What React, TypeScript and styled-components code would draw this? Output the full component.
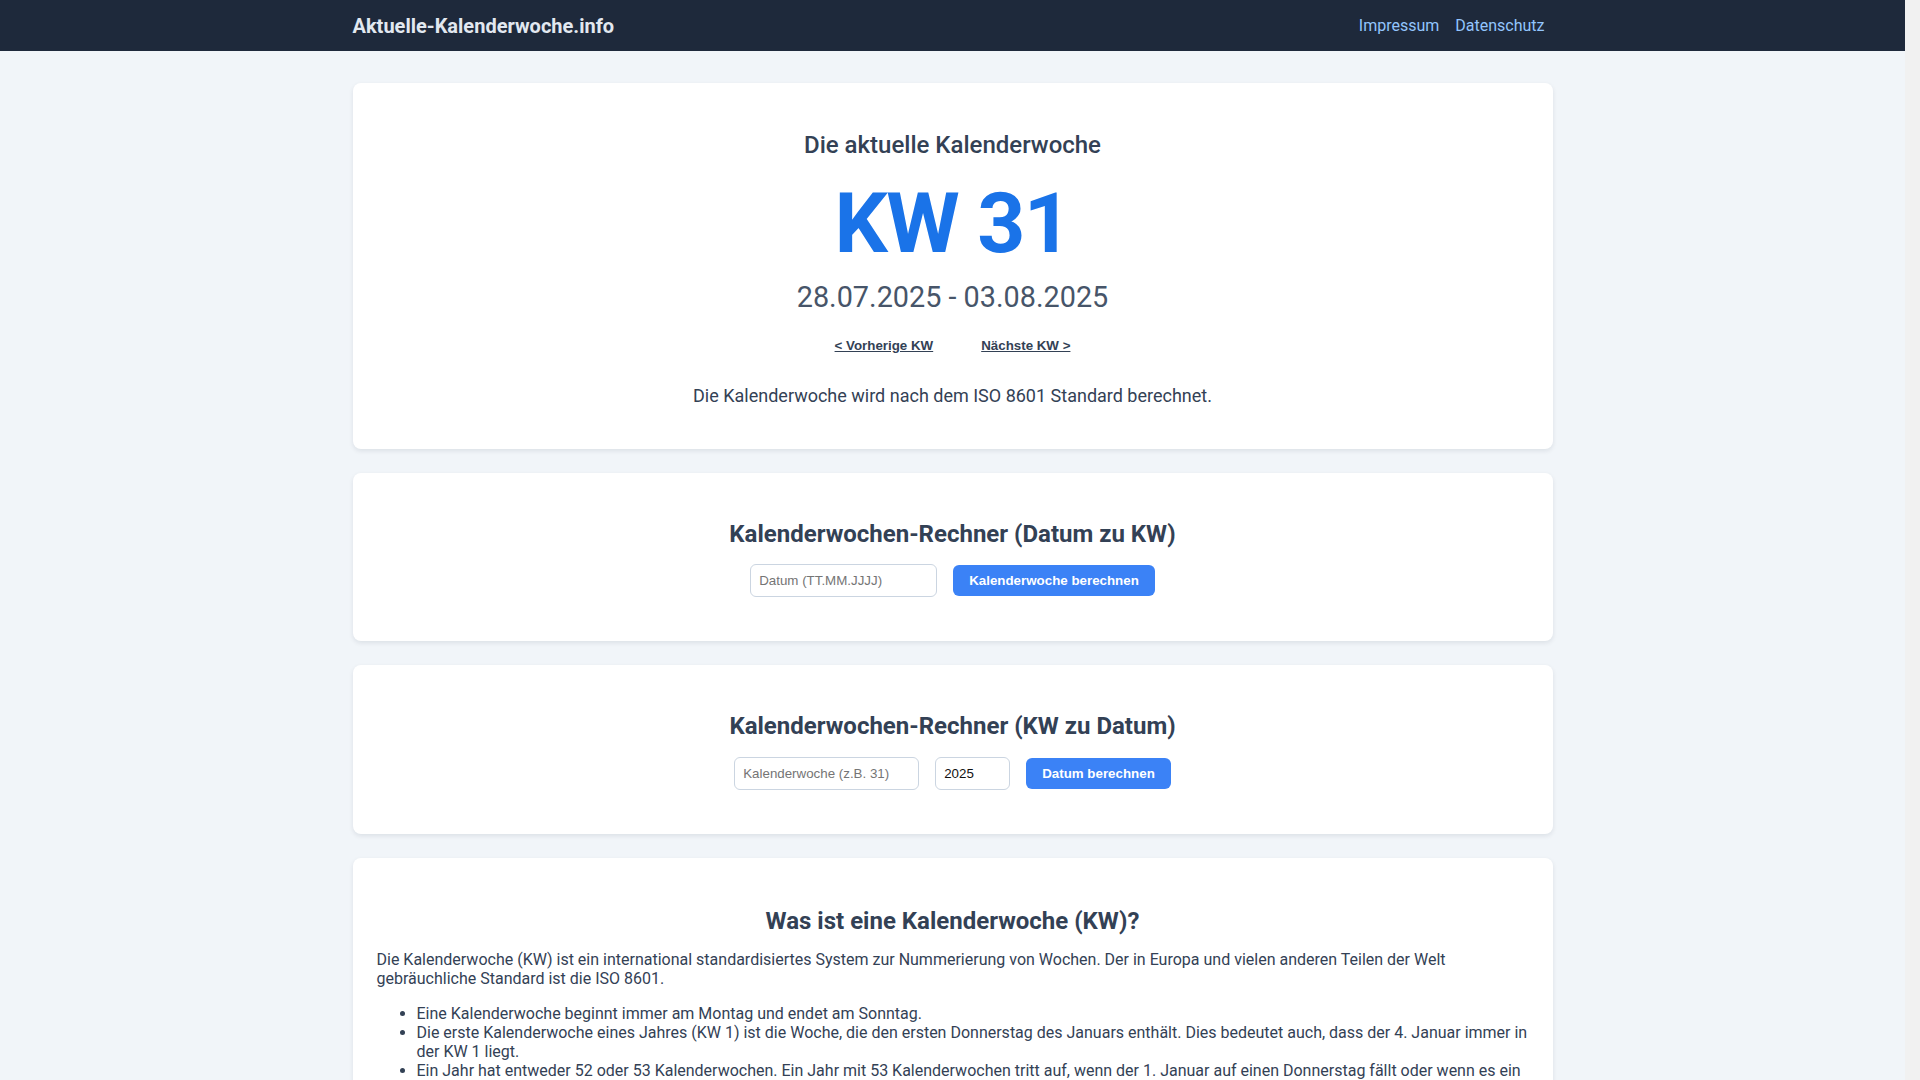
import React from "react";
import styled, { createGlobalStyle } from "styled-components";

const GlobalStyle = createGlobalStyle`
  html {
    margin: 0;
    padding: 0;
    background: #f1f1f1;
  }
  body {
    margin: 0 15px 0 0;
    padding: 0;
    min-height: 100vh;
    background: #f1f5f9;
    font-family: Roboto, "Noto Sans", "Liberation Sans", Arial, sans-serif;
    color: #334155;
    line-height: 1.2;
  }
  * { box-sizing: border-box; }
`;

const HeaderBar = styled.header`
  background: #1e293b;
  height: 51px;
`;

const HeaderInner = styled.div`
  max-width: 1200px;
  height: 100%;
  margin: 0 auto;
  display: flex;
  align-items: center;
  justify-content: space-between;
`;

const Brand = styled.a`
  color: #e2e8f0;
  font-size: 20px;
  font-weight: 700;
  text-decoration: none;
`;

const Nav = styled.nav`
  display: flex;
  align-items: center;
`;

const NavLink = styled.a`
  color: #93c5fd;
  font-size: 16px;
  padding: 0 8px;
  text-decoration: none;
`;

const Main = styled.main`
  max-width: 1200px;
  margin: 0 auto;
  padding: 32px 0 48px;
  display: flex;
  flex-direction: column;
  gap: 24px;
`;

const Card = styled.section`
  background: #ffffff;
  border-radius: 8px;
  box-shadow: 0 2px 5px rgba(15, 23, 42, 0.09);
  padding: 24px;
  display: flex;
  flex-direction: column;
`;

const CurrentTitle = styled.h1`
  margin: 23.8px 0 0;
  text-align: center;
  font-size: 24px;
  font-weight: 500;
  line-height: 1.2;
  color: #334155;
`;

const WeekNumber = styled.div`
  margin-top: 22.7px;
  text-align: center;
  font-size: 84px;
  font-weight: 700;
  letter-spacing: -0.02em;
  line-height: 1;
  color: #1a73e8;
`;

const DateRange = styled.div`
  margin-top: 14px;
  text-align: center;
  font-size: 28.8px;
  line-height: 1.2;
  color: #475569;
`;

const WeekNav = styled.div`
  margin-top: 23px;
  display: flex;
  justify-content: center;
  gap: 48px;
`;

const LinkButton = styled.button`
  background: none;
  border: none;
  padding: 0;
  font-family: "Liberation Sans", Arial, sans-serif;
  font-size: 13.333px;
  font-weight: 700;
  line-height: 15px;
  color: #334155;
  text-decoration: underline;
  cursor: pointer;
`;

const Note = styled.p`
  margin: 32px 0 18.5px;
  text-align: center;
  font-size: 18px;
  line-height: 1.2;
  color: #334155;
`;

const SectionTitle = styled.h2<{ $spaced?: boolean }>`
  margin: ${(p) => (p.$spaced ? "25px 0 14px" : "22.6px 0 16px")};
  text-align: center;
  font-size: 24px;
  font-weight: 700;
  line-height: 1.2;
  color: #334155;
`;

const FormRow = styled.div`
  margin-bottom: 20px;
  display: flex;
  justify-content: center;
  align-items: center;
  gap: 16px;
`;

const TextInput = styled.input<{ $w: number }>`
  width: ${(p) => p.$w}px;
  height: 33px;
  padding: 8px;
  border: 1px solid #cbd5e1;
  border-radius: 6px;
  background: #fff;
  font-family: "Liberation Sans", Arial, sans-serif;
  font-size: 13.333px;
  color: #111;
  outline: none;
  &::placeholder {
    color: #757575;
  }
`;

const PrimaryButton = styled.button`
  height: 31px;
  padding: 0 16px;
  border: none;
  border-radius: 6px;
  background: #3b82f6;
  color: #ffffff;
  font-family: "Liberation Sans", Arial, sans-serif;
  font-size: 13.333px;
  font-weight: 700;
  cursor: pointer;
`;

const Paragraph = styled.p`
  margin: 0 0 16px;
  font-size: 16px;
  line-height: 1.2;
  color: #334155;
`;

const List = styled.ul`
  margin: 0 0 16px;
  padding-left: 40px;
  font-size: 16px;
  line-height: 1.2;
  color: #334155;
`;

const Item = styled.li``;

export default function App() {
  return (
    <>
      <GlobalStyle />
      <HeaderBar>
        <HeaderInner>
          <Brand href="#">Aktuelle-Kalenderwoche.info</Brand>
          <Nav>
            <NavLink href="#">Impressum</NavLink>
            <NavLink href="#">Datenschutz</NavLink>
          </Nav>
        </HeaderInner>
      </HeaderBar>
      <Main>
        <Card>
          <CurrentTitle>Die aktuelle Kalenderwoche</CurrentTitle>
          <WeekNumber>KW 31</WeekNumber>
          <DateRange>28.07.2025 - 03.08.2025</DateRange>
          <WeekNav>
            <LinkButton>&lt; Vorherige KW</LinkButton>
            <LinkButton>Nächste KW &gt;</LinkButton>
          </WeekNav>
          <Note>Die Kalenderwoche wird nach dem ISO 8601 Standard berechnet.</Note>
        </Card>

        <Card>
          <SectionTitle>Kalenderwochen-Rechner (Datum zu KW)</SectionTitle>
          <FormRow>
            <TextInput $w={187} type="text" placeholder="Datum (TT.MM.JJJJ)" />
            <PrimaryButton>Kalenderwoche berechnen</PrimaryButton>
          </FormRow>
        </Card>

        <Card>
          <SectionTitle>Kalenderwochen-Rechner (KW zu Datum)</SectionTitle>
          <FormRow>
            <TextInput $w={185} type="text" placeholder="Kalenderwoche (z.B. 31)" />
            <TextInput $w={75} type="text" defaultValue="2025" />
            <PrimaryButton>Datum berechnen</PrimaryButton>
          </FormRow>
        </Card>

        <Card>
          <SectionTitle $spaced>Was ist eine Kalenderwoche (KW)?</SectionTitle>
          <Paragraph>
            Die Kalenderwoche (KW) ist ein international standardisiertes System zur Nummerierung von
            Wochen. Der in Europa und vielen anderen Teilen der Welt gebräuchliche Standard ist die ISO 8601.
          </Paragraph>
          <List>
            <Item>Eine Kalenderwoche beginnt immer am Montag und endet am Sonntag.</Item>
            <Item>
              Die erste Kalenderwoche eines Jahres (KW 1) ist die Woche, die den ersten Donnerstag des
              Januars enthält. Dies bedeutet auch, dass der 4. Januar immer in der KW 1 liegt.
            </Item>
            <Item>
              Ein Jahr hat entweder 52 oder 53 Kalenderwochen. Ein Jahr mit 53 Kalenderwochen tritt auf,
              wenn der 1. Januar auf einen Donnerstag fällt oder wenn es ein Schaltjahr ist und der 1. Januar
              auf einen Mittwoch fällt.
            </Item>
            <Item>
              Die Tage vom 29. Dezember bis 3. Januar können je nach Jahr zur letzten Kalenderwoche des
              Vorjahres oder zur ersten Kalenderwoche des neuen Jahres gehören.
            </Item>
          </List>
          <Paragraph>
            Kalenderwochen werden vor allem im beruflichen Umfeld genutzt, etwa für die Planung von
            Projekten, Lieferterminen, Urlauben und Schichtplänen.
          </Paragraph>
        </Card>
      </Main>
    </>
  );
}
